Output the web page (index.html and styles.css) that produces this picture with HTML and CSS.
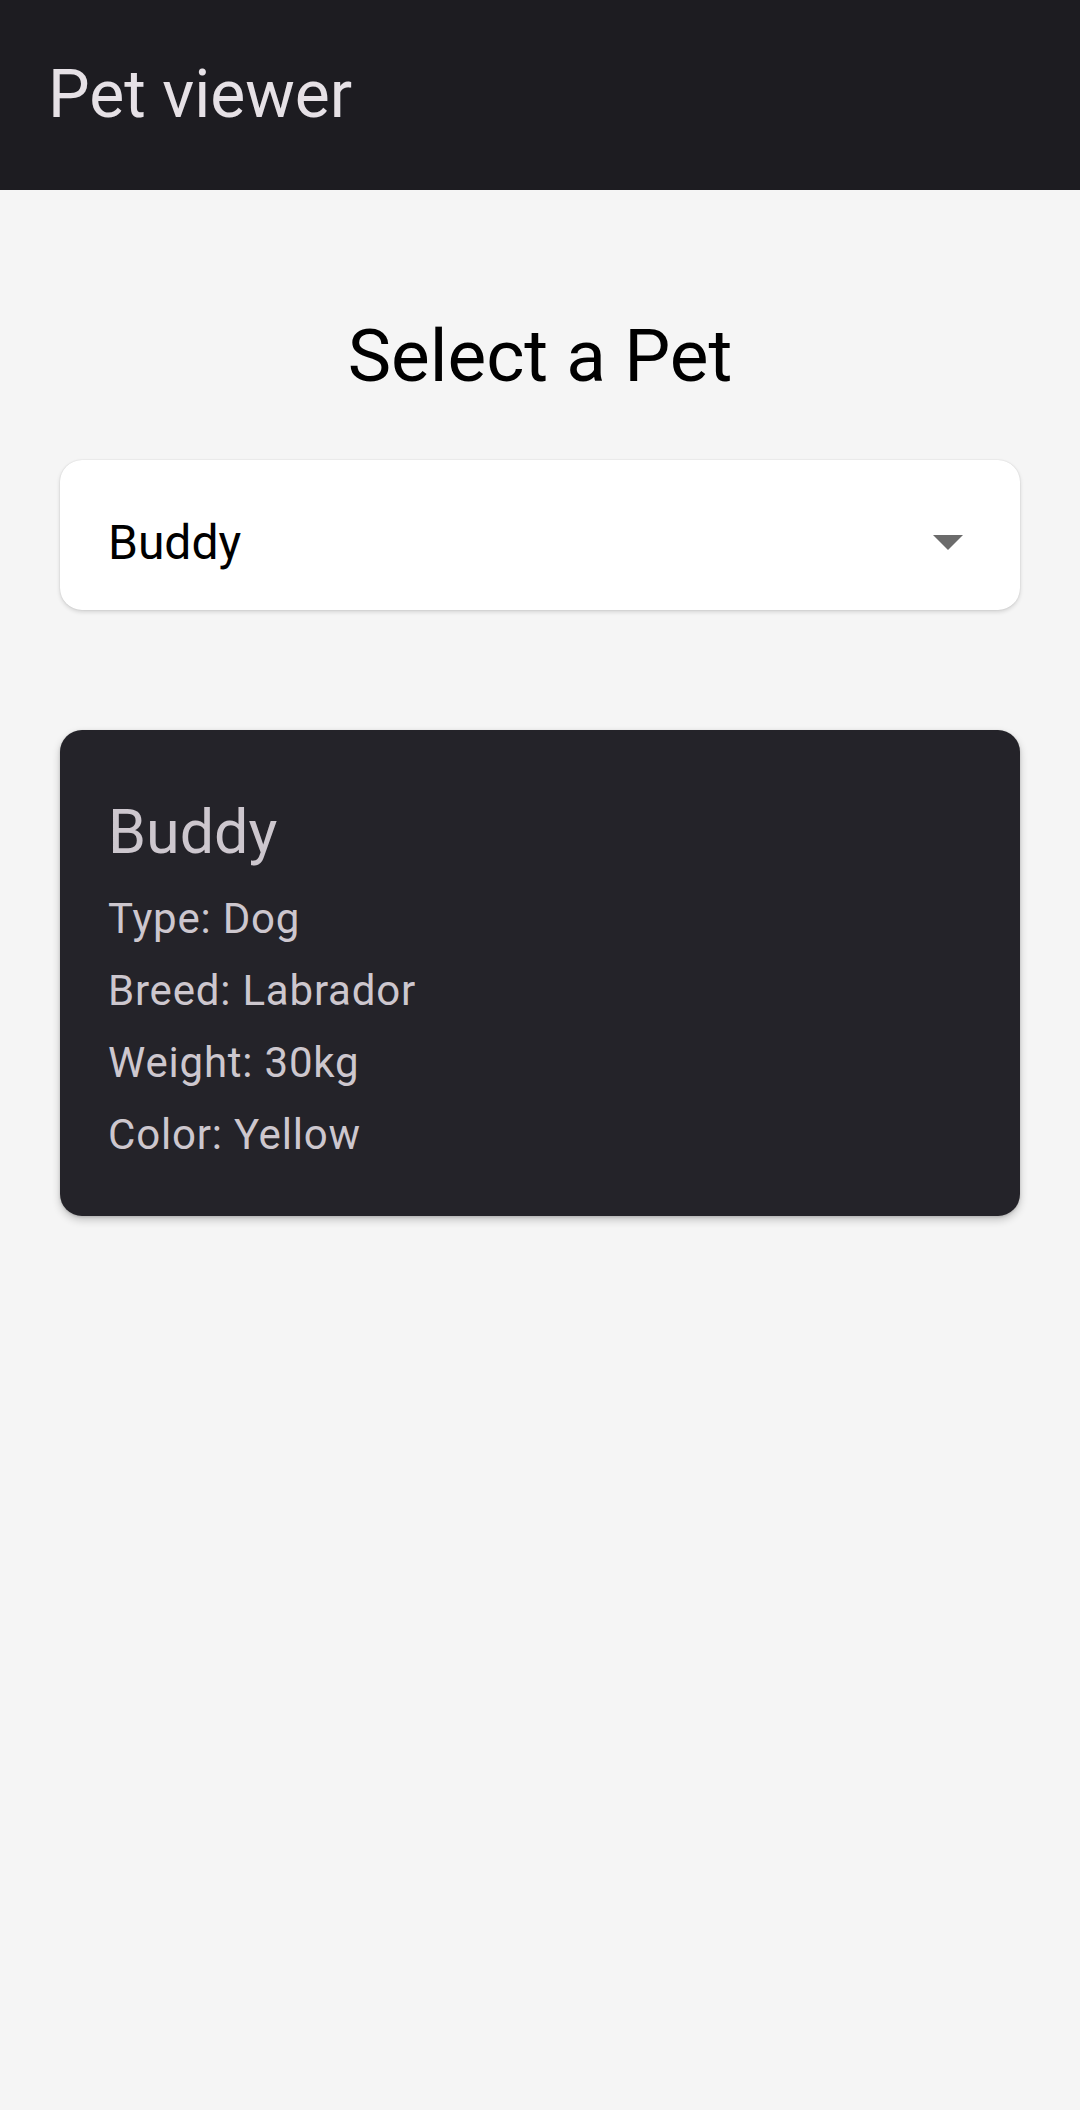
FILE: index.html
```html
<!DOCTYPE html>
<html lang="en">
<head>
<meta charset="utf-8">
<title>Pet viewer</title>
<link rel="stylesheet" href="styles.css">
</head>
<body>
<header class="app-bar">
  <h1 class="app-title">Pet viewer</h1>
</header>
<main class="content">
  <h2 class="heading">Select a Pet</h2>
  <div class="select">
    <span class="select-value">Buddy</span>
    <svg class="select-arrow" width="30" height="15" viewBox="0 0 30 15" aria-hidden="true">
      <path d="M0 0 L30 0 L15 15 Z" fill="#6b6b6b"/>
    </svg>
  </div>
  <section class="pet-card">
    <h3 class="pet-name">Buddy</h3>
    <p class="pet-line">Type: Dog</p>
    <p class="pet-line">Breed: Labrador</p>
    <p class="pet-line">Weight: 30kg</p>
    <p class="pet-line">Color: Yellow</p>
  </section>
</main>
</body>
</html>
```

FILE: styles.css
```css
html, body {
  margin: 0;
  padding: 0;
}

body {
  background: #f5f5f5;
  font-family: Roboto, "Liberation Sans", Arial, sans-serif;
  min-height: 2110px;
}

.app-bar {
  height: 190px;
  background: #1d1c21;
  display: flex;
  align-items: center;
  padding: 0 48px;
  box-sizing: border-box;
}

.app-title {
  margin: 0;
  font-size: 66px;
  font-weight: 400;
  color: #e6e1e6;
  line-height: 78px;
}

.content {
  padding: 0 60px;
  display: flex;
  flex-direction: column;
}

.heading {
  margin: 124px 0 62px;
  text-align: center;
  font-size: 73px;
  font-weight: 400;
  line-height: 84px;
  color: #000;
}

.select {
  height: 150px;
  box-sizing: border-box;
  background: #fff;
  border-radius: 22px;
  padding: 15px 57px 0 48px;
  display: flex;
  align-items: center;
  justify-content: space-between;
  box-shadow: 0 2px 4px rgba(0, 0, 0, 0.14), 0 0 1.5px rgba(0, 0, 0, 0.14);
  margin-bottom: 120px;
}

.select-value {
  font-size: 48px;
  line-height: 56px;
  color: #000;
}

.select-arrow {
  display: block;
}

.pet-card {
  background: #242329;
  border-radius: 22px;
  padding: 66px 48px 51px;
  box-shadow: 0 4px 8px rgba(0, 0, 0, 0.2), 0 1px 3px rgba(0, 0, 0, 0.15);
  display: flex;
  flex-direction: column;
  gap: 12px;
}

.pet-name {
  margin: 0 0 9px;
  font-size: 61px;
  font-weight: 400;
  line-height: 72px;
  color: #cdc7ce;
}

.pet-line {
  margin: 0;
  font-size: 42px;
  line-height: 60px;
  letter-spacing: 0.8px;
  color: #cdc7ce;
}
```
